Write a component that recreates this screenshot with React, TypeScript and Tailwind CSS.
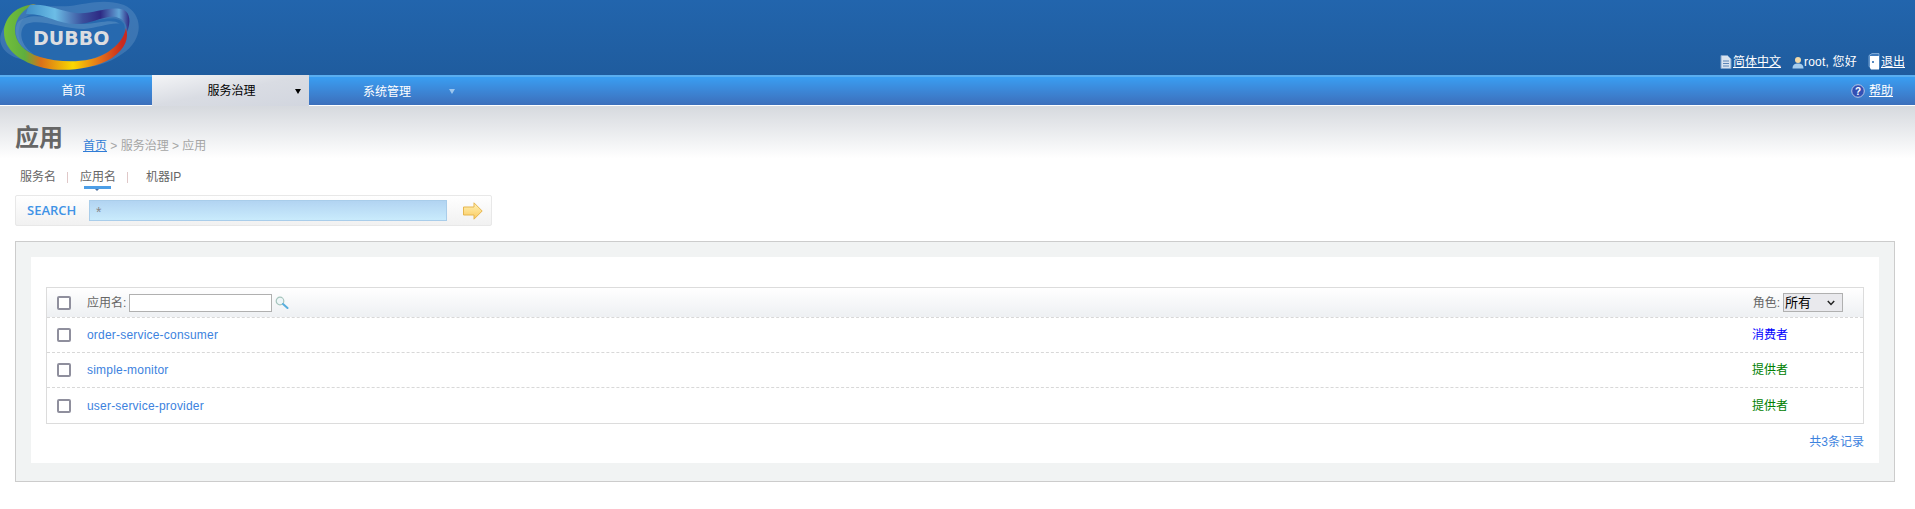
import React from 'react';

const font = "font-['Liberation_Sans','Noto_Sans_CJK_SC',sans-serif]";

const Logo: React.FC = () => (
  <div className="relative w-[140px] h-[72px]">
    <svg width="140" height="72" viewBox="0 0 140 72" className="absolute left-0 top-0">
      <defs>
        <linearGradient id="ring" x1="0" y1="0" x2="1" y2="0">
          <stop offset="0" stopColor="#72bf3a" />
          <stop offset="0.17" stopColor="#5fae3e" />
          <stop offset="0.3" stopColor="#d9701a" />
          <stop offset="0.56" stopColor="#f9d800" />
          <stop offset="0.78" stopColor="#e2701a" />
          <stop offset="0.96" stopColor="#c92a1e" />
        </linearGradient>
        <linearGradient id="ribbon" x1="0" y1="0" x2="1" y2="0">
          <stop offset="0" stopColor="#3f8fc8" />
          <stop offset="0.28" stopColor="#6cbde6" />
          <stop offset="0.55" stopColor="#3a4f9c" />
          <stop offset="0.72" stopColor="#2e2a84" />
          <stop offset="0.9" stopColor="#62a6d8" />
          <stop offset="1" stopColor="#2e2a84" />
        </linearGradient>
      </defs>
      <path d="M1 34C-3 46 8 58 26 60C50 74 98 72 122 54C144 40 144 14 124 5C104 -2 86 4 70 6C50 8 24 0 10 18C6 22 3 28 1 34Z" fill="#7ba6cf" fillOpacity="0.3" />
      <path d="M24 18C40 6 64 22 84 22C100 20 118 14 124 24C128 36 118 50 104 54C84 64 54 62 36 56C18 50 14 30 24 18Z" fill="#2568ae" fillOpacity="0.9" />
      <path d="M18 22C34 8 64 24 84 24C98 24 112 18 120 24C112 22 98 28 84 29C64 29 40 18 26 24C18 30 20 46 34 54C18 48 12 32 18 22Z" fill="#5f93c4" fillOpacity="0.55" />
      <path d="M4 32C4 17 17 5 36 4C24 8 15 18 15 30C15 42 24 52 40 57C60 63 90 64 108 52C118 45 124 38 126 28C129 38 126 48 112 58C92 70 62 72 44 68C20 62 4 50 4 32Z" fill="url(#ring)" />
      <path d="M30 5C46 3 60 11 76 13C92 15 110 5 124 10C130 13 131 22 127 32C127 24 124 19 116 17C104 15 92 24 76 24C58 24 44 13 26 14C27 10 28 7 30 5Z" fill="url(#ribbon)" />
    </svg>
    <span className="absolute left-[33px] top-[27px] font-['DejaVu_Sans',sans-serif] font-bold text-[19px] leading-[22px] text-[#dcdde0]">DUBBO</span>
  </div>
);

const DocIcon: React.FC = () => (
  <svg width="12" height="14" viewBox="0 0 12 14" className="mr-px">
    <path d="M1 0.5H7.5L11 4V13.5H1Z" fill="#d8e3f0" stroke="#7fa3cc" />
    <path d="M3 6H9M3 8.5H9M3 11H9" stroke="#5d86b8" />
  </svg>
);

const UserIcon: React.FC = () => (
  <svg width="12" height="13" viewBox="0 0 12 13">
    <circle cx="6" cy="4" r="3" fill="#f1d9a8" />
    <path d="M0.5 12.5C0.5 8.5 3 7.5 6 7.5C9 7.5 11.5 8.5 11.5 12.5Z" fill="#a5cdee" />
  </svg>
);

const DoorIcon: React.FC = () => (
  <svg width="12" height="17" viewBox="0 0 12 17" className="mr-px">
    <path d="M1 2.5L4 0.5H11V15.5H4L1 13.5Z" fill="#3f7bbd" stroke="#9cc0e4" strokeWidth="0.7" />
    <path d="M2 3H11V16.5H3L2 15Z" fill="#ffffff" />
    <circle cx="5" cy="9" r="1" fill="#2163ab" />
  </svg>
);

const HelpIcon: React.FC = () => (
  <svg width="14" height="14" viewBox="0 0 14 14">
    <circle cx="7" cy="7" r="6.3" fill="#3350b4" stroke="#b9c6e6" />
    <text x="7" y="10.5" textAnchor="middle" fontSize="10" fontWeight="700" fontFamily="Liberation Sans" fill="#fff">?</text>
  </svg>
);

const SearchIcon: React.FC = () => (
  <svg width="14" height="13" viewBox="0 0 14 13">
    <circle cx="5" cy="5" r="3.8" fill="#eef6f8" stroke="#a5c4bc" strokeWidth="1.2" />
    <path d="M8 8L12.5 12" stroke="#58aede" strokeWidth="2" strokeLinecap="round" />
  </svg>
);

const ArrowIcon: React.FC = () => (
  <svg width="20" height="18" viewBox="0 0 20 18">
    <defs>
      <linearGradient id="arrow" x1="0" y1="0" x2="0" y2="1">
        <stop offset="0" stopColor="#fff3b8" />
        <stop offset="1" stopColor="#fbc95e" />
      </linearGradient>
    </defs>
    <path d="M0.5 5H11V0.8L19.2 9L11 17.2V13H0.5Z" fill="url(#arrow)" stroke="#e6b64f" />
  </svg>
);

const Checkbox: React.FC = () => (
  <span className="block w-[14px] h-[14px] rounded-[2px] border-2 border-[#8f8f9d] bg-white" />
);

const rows = [
  { name: 'order-service-consumer', role: '消费者', color: 'text-[#0000ff]' },
  { name: 'simple-monitor', role: '提供者', color: 'text-[#008000]' },
  { name: 'user-service-provider', role: '提供者', color: 'text-[#008000]' },
];

const App: React.FC = () => {
  return (
    <div className={`${font} w-[1915px] h-[509px] overflow-hidden bg-white text-[12px] text-[#666]`}>
      <header className="h-[75px] bg-gradient-to-b from-[#2265ad] to-[#1f5c9e] flex justify-between">
        <Logo />
        <div className="flex items-end gap-[11px] pr-[10px] pb-[5px] text-white leading-[16px]">
          <a className="flex items-center underline"><DocIcon />简体中文</a>
          <span className="flex items-center tracking-[0.2px]"><UserIcon />root, 您好</span>
          <a className="flex items-center underline"><DoorIcon />退出</a>
        </div>
      </header>

      <nav className="h-[31px] border-t-2 border-t-[#5aaeef] border-b border-b-white bg-gradient-to-b from-[#399ef2] to-[#3c6fbb] flex items-stretch text-white">
        <a className="w-[152px] flex items-center justify-center pr-[5px]">首页</a>
        <div className="relative w-[157px] -mt-[2px] -mb-[1px] bg-gradient-to-br from-[#f4f5f7] via-[#d9dce3] to-[#d2d6df] flex items-center justify-center text-black pl-[2px]">
          服务治理
          <span className="absolute right-[8px] top-[14px] w-0 h-0 border-x-[3px] border-x-transparent border-t-[5px] border-t-black" />
        </div>
        <div className="relative w-[160px] flex items-center justify-center pt-[1px] pr-[4px]">
          系统管理
          <span className="absolute right-[14px] top-[12px] w-0 h-0 border-x-[3px] border-x-transparent border-t-[5px] border-t-[#9cc6ee]" />
        </div>
        <a className="ml-auto flex items-center gap-[4px] pr-[22px] underline"><HelpIcon />帮助</a>
      </nav>

      <main className="h-[403px] bg-gradient-to-b from-[#d6d9de] via-white via-[13%] to-white px-[15px] pt-[17px]">
        <div className="flex items-end h-[30px]">
          <h1 className="w-[68px] text-[24px] leading-[30px] font-bold text-[#666]">应用</h1>
          <p className="leading-[16px] text-[#a5a5a5] -mb-px">
            <a className="text-[#2f7cd6] underline">首页</a> &gt; 服务治理 &gt; 应用
          </p>
        </div>

        <div className="flex h-[33px] mt-[8px] leading-[16px] text-[#666]">
          <span className="ml-[5px] mt-[8px]">服务名</span>
          <span className="ml-[11px] mt-[11px] w-px h-[11px] bg-[#e0c8c8]" />
          <div className="ml-[12px] mt-[8px] relative">
            应用名
            <span className="absolute left-[4px] top-[17px] w-[27px] h-[3px] bg-[#4d9ee6]" />
            <span className="absolute left-[15px] top-[20px] w-0 h-0 border-x-[2px] border-x-transparent border-t-[2px] border-t-[#4d6f9e]" />
          </div>
          <span className="ml-[11px] mt-[11px] w-px h-[11px] bg-[#e0c8c8]" />
          <span className="ml-[18px] mt-[8px]">机器IP</span>
        </div>

        <div className="w-[477px] h-[31px] mt-px flex items-center border border-[#e8e8e8] rounded-[2px] bg-gradient-to-b from-white to-[#f1f1f1]">
          <span className="w-[73px] pl-[11px] text-[13px] font-['Open_Sans',sans-serif] font-semibold text-[#3f93e6]">SEARCH</span>
          <div className="w-[358px] h-[21px] pl-[6px] text-[#888] text-[14px] leading-[22px] border border-[#a9cdea] bg-gradient-to-b from-[#b2d4f2] to-[#c9ebfc]">*</div>
          <span className="ml-[16px] flex"><ArrowIcon /></span>
        </div>

        <section className="w-[1880px] h-[241px] mt-[15px] border border-[#ccc] bg-[#f1f3f3] p-[15px]">
          <div className="h-[206px] bg-white px-[15px] pt-[30px]">
            <div className="border border-[#dcdcdc]">
              <div className="h-[30px] flex items-center bg-gradient-to-b from-white to-[#eef0f3] border-b border-dashed border-b-[#d8d8d8]">
                <span className="ml-[10px] w-[30px]"><Checkbox /></span>
                <span>应用名:</span>
                <span className="ml-[3px] w-[143px] h-[18px] border border-[#b0b0b0] bg-white" />
                <span className="ml-[3px] flex"><SearchIcon /></span>
                <span className="ml-auto">角色:</span>
                <span className="ml-[3px] mr-[20px] w-[60px] h-[19px] pl-[1px] pr-[7px] flex items-center justify-between border border-[#b0b0b0] bg-[#e9e9ed] text-black text-[13px]">
                  所有
                  <svg width="8" height="6" viewBox="0 0 8 6"><path d="M0.8 1L4 4.4L7.2 1" fill="none" stroke="#222" strokeWidth="1.5" /></svg>
                </span>
              </div>
              {rows.map((row, i) => (
                <div key={row.name} className={`h-[35px] flex items-center ${i < rows.length - 1 ? 'border-b border-dashed border-b-[#d8d8d8]' : ''}`}>
                  <span className="ml-[10px] w-[30px]"><Checkbox /></span>
                  <a className="text-[#3c82de] tracking-[0.2px]">{row.name}</a>
                  <span className={`ml-auto w-[111px] ${row.color}`}>{row.role}</span>
                </div>
              ))}
            </div>
            <p className="mt-[10px] leading-[16px] text-right text-[#3c82de]">共3条记录</p>
          </div>
        </section>
      </main>
    </div>
  );
};

export default App;
